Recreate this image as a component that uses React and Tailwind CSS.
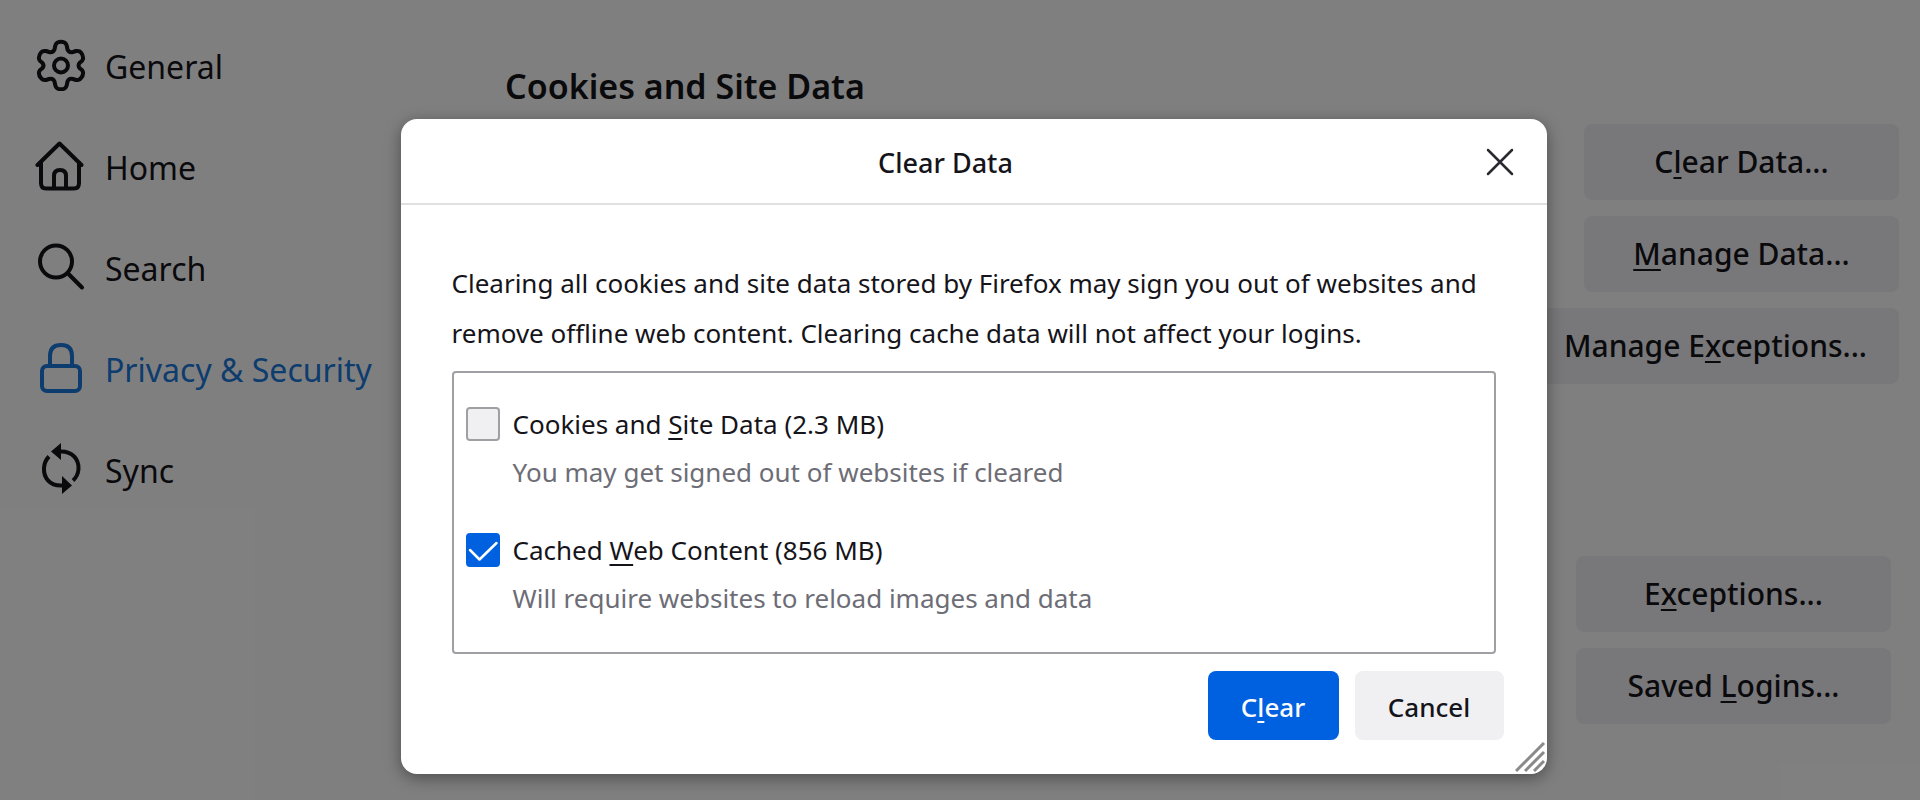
import React, { useState } from 'react';

const GearIcon = () => (
    <svg viewBox="0 0 52 52" className="w-[52px] h-[52px]" fill="none" stroke="currentColor" strokeWidth="4" strokeLinejoin="round">
        <path d="M22.5 3.5Q26 2 29.500 3.500Q31.500 4.500 32 8L32.500 10.500Q34 14 38 13L41 12Q44.500 11.500 46 13.500Q48.500 16.500 48 20Q47.500 22 45 23.500Q42 26.500 45 29.500Q47.500 31 48 33Q48.500 36.500 46 39Q44.500 41.500 41 41L38 40Q34 39 32.500 42.500L32 45Q31.500 48.500 29.500 49.500Q26 51 22.500 49.500Q20.500 48.500 20 45L19.500 42.500Q18 39 14 40L11 41Q7.500 41.500 6 39Q3.500 36.500 4 33Q4.500 31 7 29.500Q10 26.500 7 23.500Q4.500 22 4 20Q3.500 16.500 6 13.500Q7.500 11.500 11 12L14 13Q18 14 19.500 10.500L20 8Q20.500 4.500 22.500 3.500Z" />
        <circle cx="26" cy="26.500" r="7" />
    </svg>
);

const HomeIcon = () => (
    <svg viewBox="0 0 52 52" className="w-[52px] h-[52px]" fill="none" stroke="currentColor" strokeWidth="4" strokeLinecap="round" strokeLinejoin="round">
        <path d="M2.500 25L24.500 3.500L46.500 25" />
        <path d="M6 23V43Q6 48.500 11 48.500H39Q44 48.500 44 43V23" />
        <path d="M19 48V36Q19 30 25 30T31 36V48" />
    </svg>
);

const SearchIcon = () => (
    <svg viewBox="0 0 52 52" className="w-[52px] h-[52px]" fill="none" stroke="currentColor" strokeWidth="4" strokeLinecap="round">
        <circle cx="21" cy="20.500" r="16" />
        <path d="M32.500 32L47 46.500" />
    </svg>
);

const LockIcon = () => (
    <svg viewBox="0 0 52 52" className="w-[52px] h-[52px]" fill="none" stroke="currentColor" strokeWidth="4">
        <rect x="7" y="24" width="38" height="25" rx="5" />
        <path d="M15 24V14Q15 3 26 3T37 14V24" />
    </svg>
);

const SyncIcon = () => (
    <svg viewBox="0 0 52 52" className="w-[52px] h-[52px]" fill="none" stroke="currentColor" strokeWidth="4">
        <path d="M25 8.500C38 8 44 17 43.500 26Q43 33 38 37.500" />
        <path d="M27 42.500C14 43 8.500 34 9 25Q9.500 18 14 13.500" />
        <path d="M26 0V17L16 8.500Z" fill="currentColor" stroke="none" />
        <path d="M27 33V51L37 42.500Z" fill="currentColor" stroke="none" />
    </svg>
);

const CATEGORIES = [
    { name: 'General', Icon: GearIcon },
    { name: 'Home', Icon: HomeIcon },
    { name: 'Search', Icon: SearchIcon },
    { name: 'Privacy & Security', Icon: LockIcon, active: true },
    { name: 'Sync', Icon: SyncIcon },
];

// Underlined access key inside a label
const Key = ({ children }) => (
    <span className="underline decoration-2 underline-offset-4">{children}</span>
);

const SettingsButton = ({ children }) => (
    <button
        type="button"
        className="min-w-[315px] h-[76px] px-8 rounded-lg bg-[#f0f0f4] text-[30px] leading-10 font-medium whitespace-nowrap"
    >
        {children}
    </button>
);

const Option = ({ id, checked, onChange, label, hint }) => (
    <div className="grid grid-cols-[34px_1fr] gap-x-[13px] items-center">
        <span className="relative w-[34px] h-[34px]">
            <input
                id={id}
                type="checkbox"
                checked={checked}
                onChange={onChange}
                aria-describedby={`${id}-hint`}
                className="block appearance-none w-[34px] h-[34px] rounded-[4px] border-2 border-[#a0a0a4] bg-[#f0f0f2] checked:border-[#0061e0] checked:bg-[#0061e0]"
            />
            {checked && (
                <svg viewBox="0 0 34 34" className="absolute inset-0 pointer-events-none" fill="none" stroke="#fff" strokeWidth="2.500" strokeLinecap="round" strokeLinejoin="round">
                    <path d="M4 17L13.500 26.500L30.500 10" />
                </svg>
            )}
        </span>
        <label htmlFor={id} className="text-[26px] leading-[48px]">{label}</label>
        <p id={`${id}-hint`} className="col-start-2 text-[26px] leading-[48px] text-[#6d6d76]">{hint}</p>
    </div>
);

const ClearDataDialog = () => {
    const [cookies, setCookies] = useState(false);
    const [cache, setCache] = useState(true);

    return (
        <div
            role="dialog"
            aria-labelledby="dialog-title"
            className="relative w-full max-w-[1146px] bg-white rounded-2xl shadow-[0_4px_16px_rgba(0,0,0,0.4)]"
        >
            <header className="relative flex items-center justify-center h-[86px] border-b-2 border-[#e0e0e2] pt-1 pr-14">
                <h2 id="dialog-title" className="text-[27px] leading-9 font-medium">Clear Data</h2>
                <button type="button" aria-label="Close" className="absolute right-8 top-7 p-px">
                    <svg viewBox="0 0 28 28" className="w-7 h-7" fill="none" stroke="#2b2a33" strokeWidth="2.500" strokeLinecap="round">
                        <path d="M2 2L26 26M26 2L2 26" />
                    </svg>
                </button>
            </header>

            <div className="pt-[53px] px-[51px]">
                <p className="text-[26px] leading-[50px]">
                    Clearing all cookies and site data stored by Firefox may sign you out of websites and
                    remove offline web content. Clearing cache data will not affect your logins.
                </p>
                <div className="mt-[13px] flex flex-col gap-[30px] rounded-[4px] border-2 border-[#a0a0a4] pt-[27px] pb-[30px] px-3">
                    <Option
                        id="clear-cookies"
                        checked={cookies}
                        onChange={(e) => setCookies(e.target.checked)}
                        label={<>Cookies and <Key>S</Key>ite Data (2.3 MB)</>}
                        hint="You may get signed out of websites if cleared"
                    />
                    <Option
                        id="clear-cache"
                        checked={cache}
                        onChange={(e) => setCache(e.target.checked)}
                        label={<>Cached <Key>W</Key>eb Content (856 MB)</>}
                        hint="Will require websites to reload images and data"
                    />
                </div>
            </div>

            <footer className="flex justify-end gap-4 pt-[17px] pb-[34px] pr-[43px]">
                <button type="button" className="w-[131px] h-[69px] pt-1 rounded-lg bg-[#0061e0] text-[#fbfbfe] text-[26px] font-medium">
                    C<Key>l</Key>ear
                </button>
                <button type="button" className="w-[149px] h-[69px] pt-1 rounded-lg bg-[#f0f0f2] text-[26px] font-medium">
                    Cancel
                </button>
            </footer>

            <svg viewBox="0 0 32 32" className="absolute right-0 bottom-0 w-8 h-8" fill="none" stroke="#8a8a8a" strokeWidth="3">
                <path d="M1 29L29 1M10 29L29 10M19 29L29 19" />
            </svg>
        </div>
    );
};

export default function App() {
    return (
        <div className="relative min-h-screen bg-white text-[#15141a] font-['Noto_Sans','Open_Sans',sans-serif] overflow-hidden">
            <div className="flex">
                <nav className="w-[505px] shrink-0 pt-[14px] pl-[35px]">
                    <ul>
                        {CATEGORIES.map(({ name, Icon, active }) => (
                            <li key={name}>
                                <a
                                    href="#"
                                    className={`flex items-center gap-[18px] h-[101px] text-[32px] leading-10 ${active ? 'text-[#1a78dd]' : ''}`}
                                >
                                    <Icon />
                                    <span className="pt-1">{name}</span>
                                </a>
                            </li>
                        ))}
                    </ul>
                </nav>

                <main className="flex-1">
                    <h1 className="pt-16 text-[34px] leading-[44px] font-semibold">Cookies and Site Data</h1>
                    <div className="mt-4 flex flex-col items-end gap-4 pr-[21px]">
                        <SettingsButton>C<Key>l</Key>ear Data...</SettingsButton>
                        <SettingsButton><Key>M</Key>anage Data...</SettingsButton>
                        <SettingsButton>Manage E<Key>x</Key>ceptions...</SettingsButton>
                    </div>
                    <div className="mt-[172px] flex flex-col items-end gap-4 pr-[29px]">
                        <SettingsButton>E<Key>x</Key>ceptions...</SettingsButton>
                        <SettingsButton>Saved <Key>L</Key>ogins...</SettingsButton>
                    </div>
                </main>
            </div>

            <div className="absolute inset-0 flex items-start justify-center bg-black/50 pt-[119px] pl-[27px]">
                <ClearDataDialog />
            </div>
        </div>
    );
}
